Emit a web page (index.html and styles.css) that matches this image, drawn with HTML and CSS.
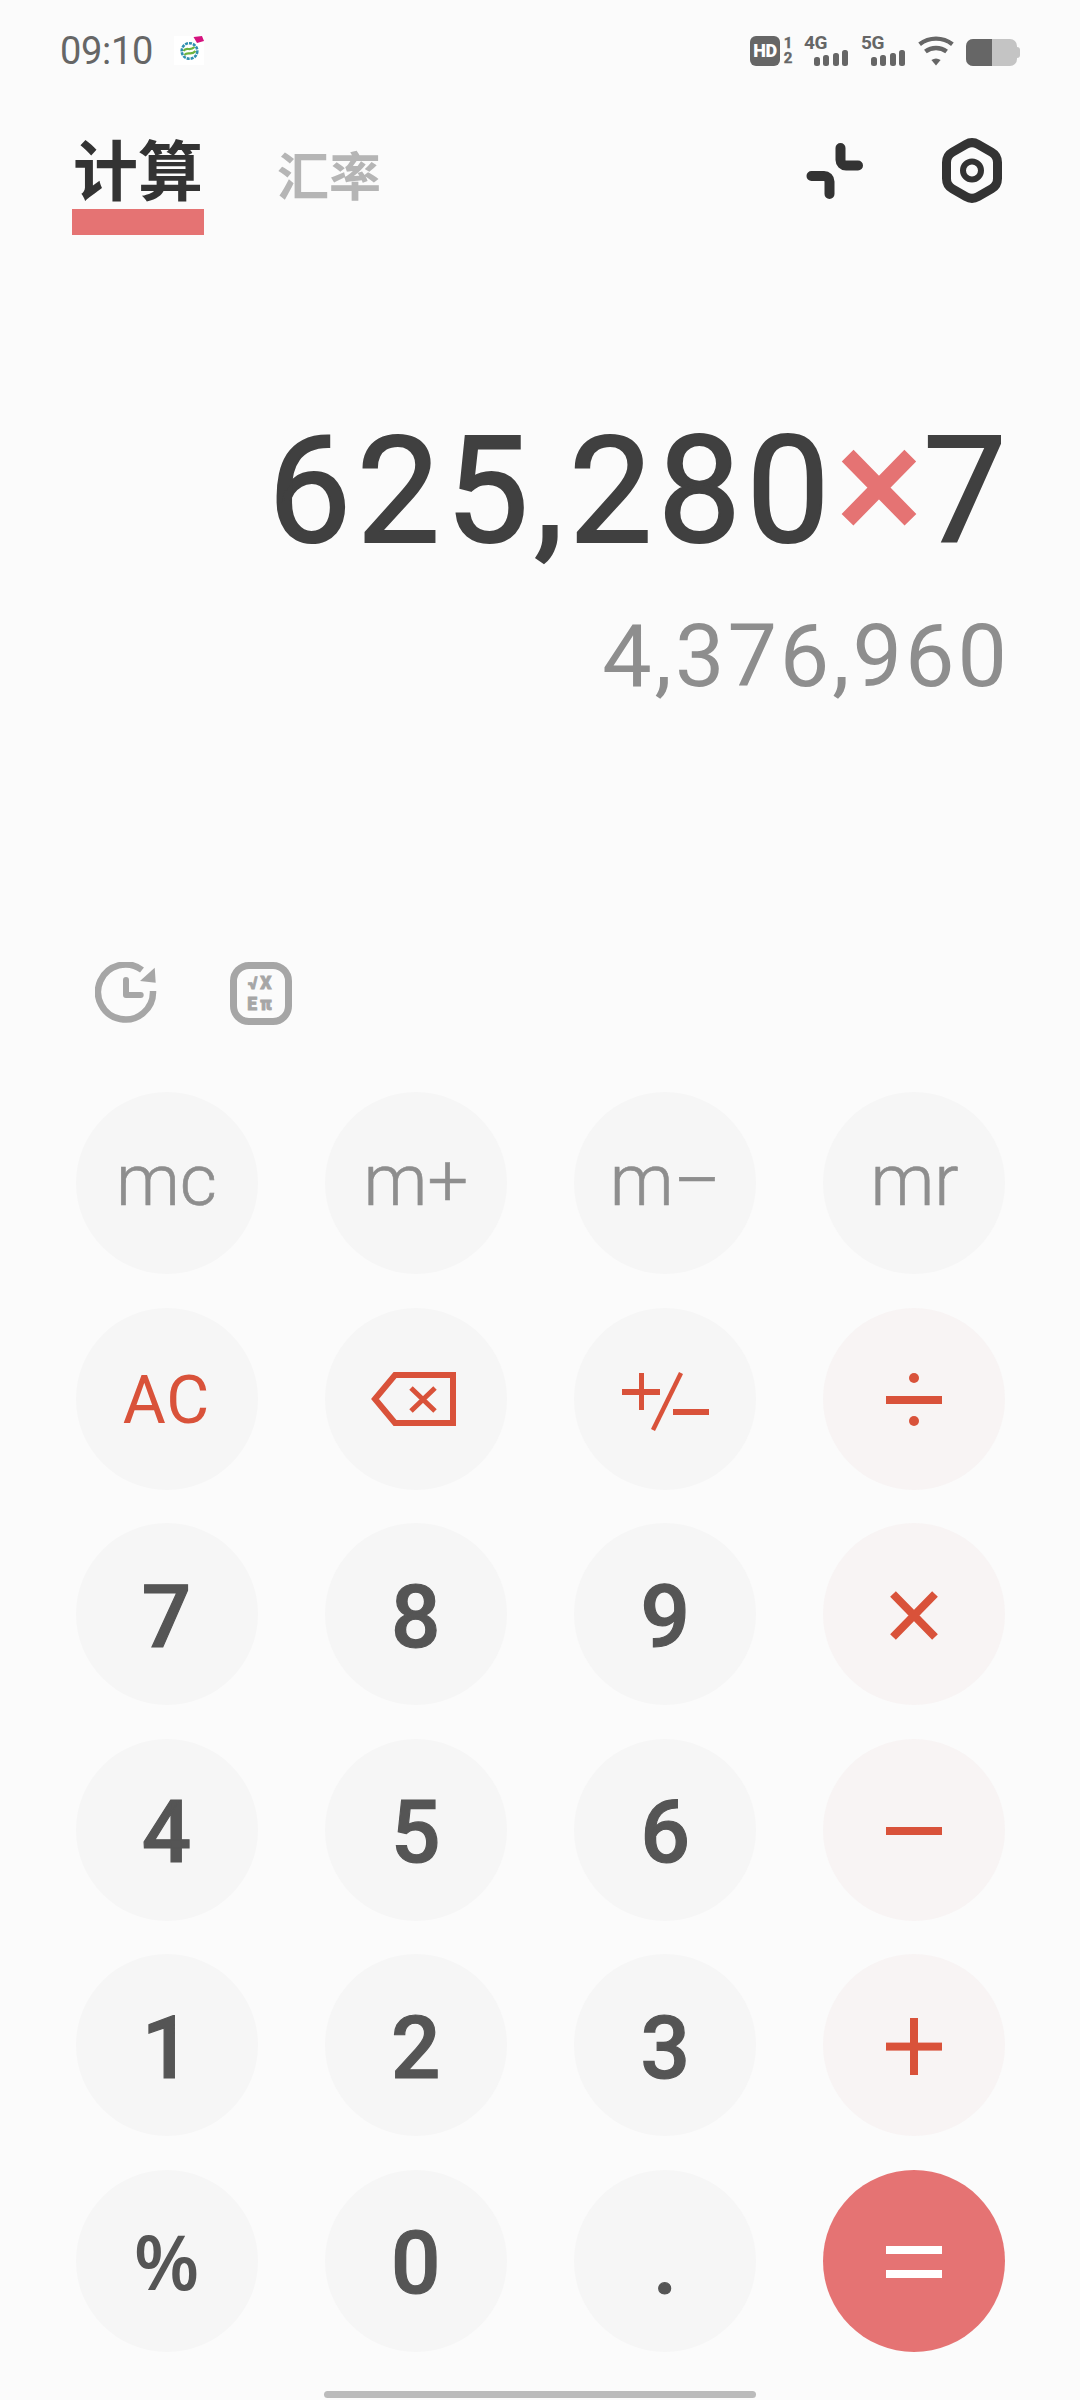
FILE: index.html
```html
<!DOCTYPE html>
<html lang="zh">
<head>
<meta charset="utf-8">
<title>计算</title>
<link rel="stylesheet" href="styles.css">
</head>
<body>
<div class="app">
  <div class="status">
    <span class="time">09:10</span>
    <span class="carrier">
      <svg width="30" height="29" viewBox="0 0 30 29">
        <rect width="30" height="29" fill="#fff"/>
        <circle cx="15.5" cy="15" r="7.8" fill="none" stroke="#2f8fb0" stroke-width="2.6" stroke-dasharray="3 1"/>
        <path d="M9.5 15 C12.5 10 15.5 16 20.5 11 M10.5 19 C13.5 15 17.5 20 21.5 15" fill="none" stroke="#6cb33f" stroke-width="2.2"/>
        <path d="M19.5 1 L28 0 L30 5 L23 7 Z" fill="#d4127e"/>
      </svg>
    </span>
    <div class="sys">
      <span class="hd">HD</span>
      <span class="sims"><span>1</span><span>2</span></span>
      <span class="net"><span class="net-label">4G</span><span class="bars"><i class="b1"></i><i class="b2"></i><i class="b3"></i><i class="b4"></i></span></span>
      <span class="net"><span class="net-label">5G</span><span class="bars"><i class="b1"></i><i class="b2"></i><i class="b3"></i><i class="b4"></i></span></span>
      <svg class="wifi" width="36" height="30" viewBox="0 0 36 30">
        <path d="M1.6 8.2 A27 27 0 0 1 34.4 8.2" fill="none" stroke="#666" stroke-width="4.4"/>
        <path d="M7.4 15.6 A17.5 17.5 0 0 1 28.6 15.6" fill="none" stroke="#666" stroke-width="4.4"/>
        <path d="M13.4 24 A8 8 0 0 1 22.6 24 L18 29.5 Z" fill="#666"/>
      </svg>
      <span class="battery"><span class="battery-fill"></span></span>
    </div>
  </div>

  <div class="header">
    <div class="tab-active"><span class="tab-active-label">计算</span><span class="tab-line"></span></div>
    <div class="tab">汇率</div>
    <div class="actions">
      <svg class="action" width="60" height="65" viewBox="0 0 60 65">
        <path d="M35.5 10 V22 a5.5 5.5 0 0 0 5.5 5.5 H53" fill="none" stroke="#333" stroke-width="10" stroke-linecap="round"/>
        <path d="M6.5 38 H19 a5.5 5.5 0 0 1 5.5 5.5 V56" fill="none" stroke="#333" stroke-width="10" stroke-linecap="round"/>
      </svg>
      <svg class="action" width="60" height="65" viewBox="0 0 60 65">
        <path d="M24 6.33 Q30 2.9 36 6.33 L49.5 14.07 Q55.5 17.5 55.5 24.5 V40.5 Q55.5 47.5 49.5 50.93 L36 58.67 Q30 62.1 24 58.67 L10.5 50.93 Q4.5 47.5 4.5 40.5 V24.5 Q4.5 17.5 10.5 14.07 Z" fill="none" stroke="#333" stroke-width="9" stroke-linejoin="round"/>
        <circle cx="30" cy="32.5" r="9" fill="none" stroke="#333" stroke-width="6"/>
      </svg>
    </div>
  </div>

  <div class="display">
    <div class="expr">625,280<span class="expr-op">×</span>7</div>
    <div class="result">4,376,960</div>
  </div>

  <div class="tools">
    <svg width="62" height="62" viewBox="0 0 62 62">
      <path d="M58 29 A27.5 27.5 0 1 1 47 8" fill="none" stroke="#a6a6a6" stroke-width="6.5"/>
      <path d="M59.7 5.7 L60.7 20.7 L45 19 Z" fill="#a6a6a6"/>
      <path d="M31 18 V33 H45.7" fill="none" stroke="#a6a6a6" stroke-width="6" stroke-linecap="round" stroke-linejoin="round"/>
    </svg>
    <div class="formula"><span class="formula-line">√X</span><span class="formula-line">Eπ</span></div>
  </div>

  <div class="keypad">
    <div class="key mem">mc</div>
    <div class="key mem">m+</div>
    <div class="key mem">m–</div>
    <div class="key mem">mr</div>

    <div class="key red-text">AC</div>
    <div class="key">
      <svg class="glyph" viewBox="0 0 182 182">
        <path d="M50 91 L70 67 H128 V115 H70 Z" fill="none" stroke="#d9523a" stroke-width="6"/>
        <path d="M86 80 L110 103 M110 80 L86 103" fill="none" stroke="#d9523a" stroke-width="5"/>
      </svg>
    </div>
    <div class="key">
      <svg class="glyph" viewBox="0 0 182 182">
        <rect x="48" y="81" width="38" height="6" fill="#d9523a"/>
        <rect x="65" y="65" width="5" height="37" fill="#d9523a"/>
        <path d="M107 65 L79 122" fill="none" stroke="#d9523a" stroke-width="4.5"/>
        <rect x="99" y="101" width="36" height="6" fill="#d9523a"/>
      </svg>
    </div>
    <div class="key op">
      <svg class="glyph" viewBox="0 0 182 182">
        <circle cx="91" cy="70" r="5" fill="#d9523a"/>
        <rect x="63" y="88" width="56" height="8" fill="#d9523a"/>
        <circle cx="91" cy="113" r="5" fill="#d9523a"/>
      </svg>
    </div>

    <div class="key num">7</div>
    <div class="key num">8</div>
    <div class="key num">9</div>
    <div class="key op">
      <svg class="glyph" viewBox="0 0 182 182">
        <path d="M70 71 L112 114 M112 71 L70 114" fill="none" stroke="#d9523a" stroke-width="8"/>
      </svg>
    </div>

    <div class="key num">4</div>
    <div class="key num">5</div>
    <div class="key num">6</div>
    <div class="key op">
      <svg class="glyph" viewBox="0 0 182 182">
        <rect x="63" y="88" width="56" height="8" fill="#d9523a"/>
      </svg>
    </div>

    <div class="key num">1</div>
    <div class="key num">2</div>
    <div class="key num">3</div>
    <div class="key op">
      <svg class="glyph" viewBox="0 0 182 182">
        <rect x="63" y="88.6" width="56" height="8" fill="#d9523a"/>
        <rect x="87" y="64" width="8" height="57" fill="#d9523a"/>
      </svg>
    </div>

    <div class="key num pct">%</div>
    <div class="key num">0</div>
    <div class="key num">.</div>
    <div class="key equals">
      <svg class="glyph" viewBox="0 0 182 182">
        <rect x="63" y="76" width="56" height="8" fill="#fff"/>
        <rect x="63" y="100" width="56" height="8" fill="#fff"/>
      </svg>
    </div>
  </div>

  <div class="home"></div>
</div>
</body>
</html>
```

FILE: styles.css
```css
* { box-sizing: border-box; }
html, body { margin: 0; padding: 0; }
body {
  width: 1080px;
  height: 2400px;
  background: #fbfbfb;
  font-family: Roboto, "Noto Sans CJK SC", sans-serif;
  overflow: hidden;
}
.app { width: 1080px; height: 2400px; display: flex; flex-direction: column; }

/* status bar */
.status {
  display: flex;
  align-items: flex-start;
  height: 66px;
  padding: 36px 60px 0 60px;
}
.time {
  font-size: 38px;
  line-height: 30px;
  color: #666;
  letter-spacing: -0.3px;
  width: 114px;
}
.carrier { display: block; height: 29px; }
.carrier svg { display: block; }
.sys { margin-left: auto; display: flex; align-items: flex-start; }
.hd {
  width: 30px;
  height: 30px;
  background: #666;
  border-radius: 6px;
  color: #fff;
  font-size: 18px;
  font-weight: 900;
  line-height: 30px;
  text-align: center;
  letter-spacing: -0.5px;
}
.sims {
  display: flex;
  flex-direction: column;
  width: 12px;
  margin-left: 2px;
  margin-right: 10px;
  color: #666;
  font-size: 15px;
  font-weight: 700;
  line-height: 15px;
  text-align: center;
  -webkit-text-stroke: 0.4px #666;
}
.net { display: flex; flex-direction: column; width: 44px; height: 30px; margin-right: 13px; }
.net-label { font-size: 19px; line-height: 14px; font-weight: 700; color: #666; letter-spacing: -0.5px; }
.bars { display: flex; justify-content: flex-end; align-items: flex-end; gap: 3.5px; height: 16px; }
.bars i { display: block; width: 6px; background: #666; border-radius: 2.5px; }
.bars .b1 { height: 9px; }
.bars .b2 { height: 11px; }
.bars .b3 { height: 13px; }
.bars .b4 { height: 16px; }
.wifi { display: block; margin-right: 12px; }
.battery {
  position: relative;
  display: block;
  width: 51px;
  height: 27px;
  margin-top: 3px;
  margin-right: 3px;
  background: #c4c4c4;
  border-radius: 7px;
  overflow: visible;
}
.battery-fill { display: block; width: 26px; height: 27px; background: #666; border-radius: 7px 0 0 7px; }
.battery::after {
  content: "";
  position: absolute;
  right: -3px;
  top: 8px;
  width: 3px;
  height: 11px;
  background: #c4c4c4;
  border-radius: 0 3px 3px 0;
}

/* header */
.header {
  display: flex;
  align-items: flex-start;
  height: 97px;
  margin-top: 72px;
  padding: 0 78px 0 72px;
}
.tab-active { display: flex; flex-direction: column; width: 132px; }
.tab-active-label {
  font-size: 65px;
  font-weight: 700;
  line-height: 71px;
  color: #333;
  text-align: center;
}
.tab-line { display: block; height: 26px; background: #e57373; }
.tab {
  margin-left: 73px;
  margin-top: 13px;
  font-size: 52px;
  font-weight: 700;
  line-height: 56px;
  color: #b5b5b5;
}
.actions { margin-left: auto; display: flex; gap: 77px; }
.action { display: block; }

/* display */
.display { margin-top: 181px; text-align: right; }
.expr {
  padding-right: 68px;
  font-size: 148px;
  font-weight: 400;
  line-height: 152px;
  color: #404040;
  letter-spacing: 5.6px;
  -webkit-text-stroke: 2px #404040;
}
.expr-op {
  color: #e57373;
  font-size: 165px;
  font-weight: 500;
  line-height: 100px;
  letter-spacing: 0;
  -webkit-text-stroke: 0;
}
.result {
  padding-right: 70px;
  margin-top: 38px;
  font-size: 88px;
  line-height: 100px;
  color: #8e8e8e;
  letter-spacing: 3px;
}

/* tools */
.tools {
  display: flex;
  align-items: flex-start;
  gap: 73px;
  height: 63px;
  margin-top: 256px;
  padding-left: 95px;
}
.tools svg { display: block; }
.formula {
  display: flex;
  flex-direction: column;
  align-items: center;
  justify-content: center;
  width: 62px;
  height: 63px;
  border: 7px solid #a6a6a6;
  border-radius: 19px;
}
.formula-line {
  display: block;
  height: 20.5px;
  font-size: 17.5px;
  font-weight: 900;
  line-height: 20.5px;
  color: #a6a6a6;
  letter-spacing: 3px;
  -webkit-text-stroke: 0.8px #a6a6a6;
}

/* keypad */
.keypad {
  display: grid;
  grid-template-columns: repeat(4, 182px);
  grid-auto-rows: 182px;
  column-gap: 67.33px;
  row-gap: 33.6px;
  margin-top: 67px;
  padding-left: 75.5px;
}
.key {
  display: flex;
  align-items: center;
  justify-content: center;
  width: 182px;
  height: 182px;
  border-radius: 50%;
  background: #f6f6f6;
}
.glyph { display: block; width: 182px; height: 182px; }
.mem { padding-bottom: 6px; font-size: 72px; font-weight: 300; color: #8e8e8e; -webkit-text-stroke: 0.6px #8e8e8e; }
.red-text { padding-top: 4px; font-size: 66px; font-weight: 400; color: #d9523a; letter-spacing: 1px; }
.num { padding-top: 5px; font-size: 87px; font-weight: 500; color: #555; -webkit-text-stroke: 1.2px #555; }
.pct { padding-top: 0; font-family: "Open Sans", sans-serif; font-size: 76px; font-weight: 600; -webkit-text-stroke: 0; }
.op { background: #f8f4f4; }
.equals { background: #e57373; }

/* home indicator */
.home {
  width: 432px;
  height: 7px;
  margin: 39px 0 0 324px;
  background: #bbb;
  border-radius: 4px;
}
```
